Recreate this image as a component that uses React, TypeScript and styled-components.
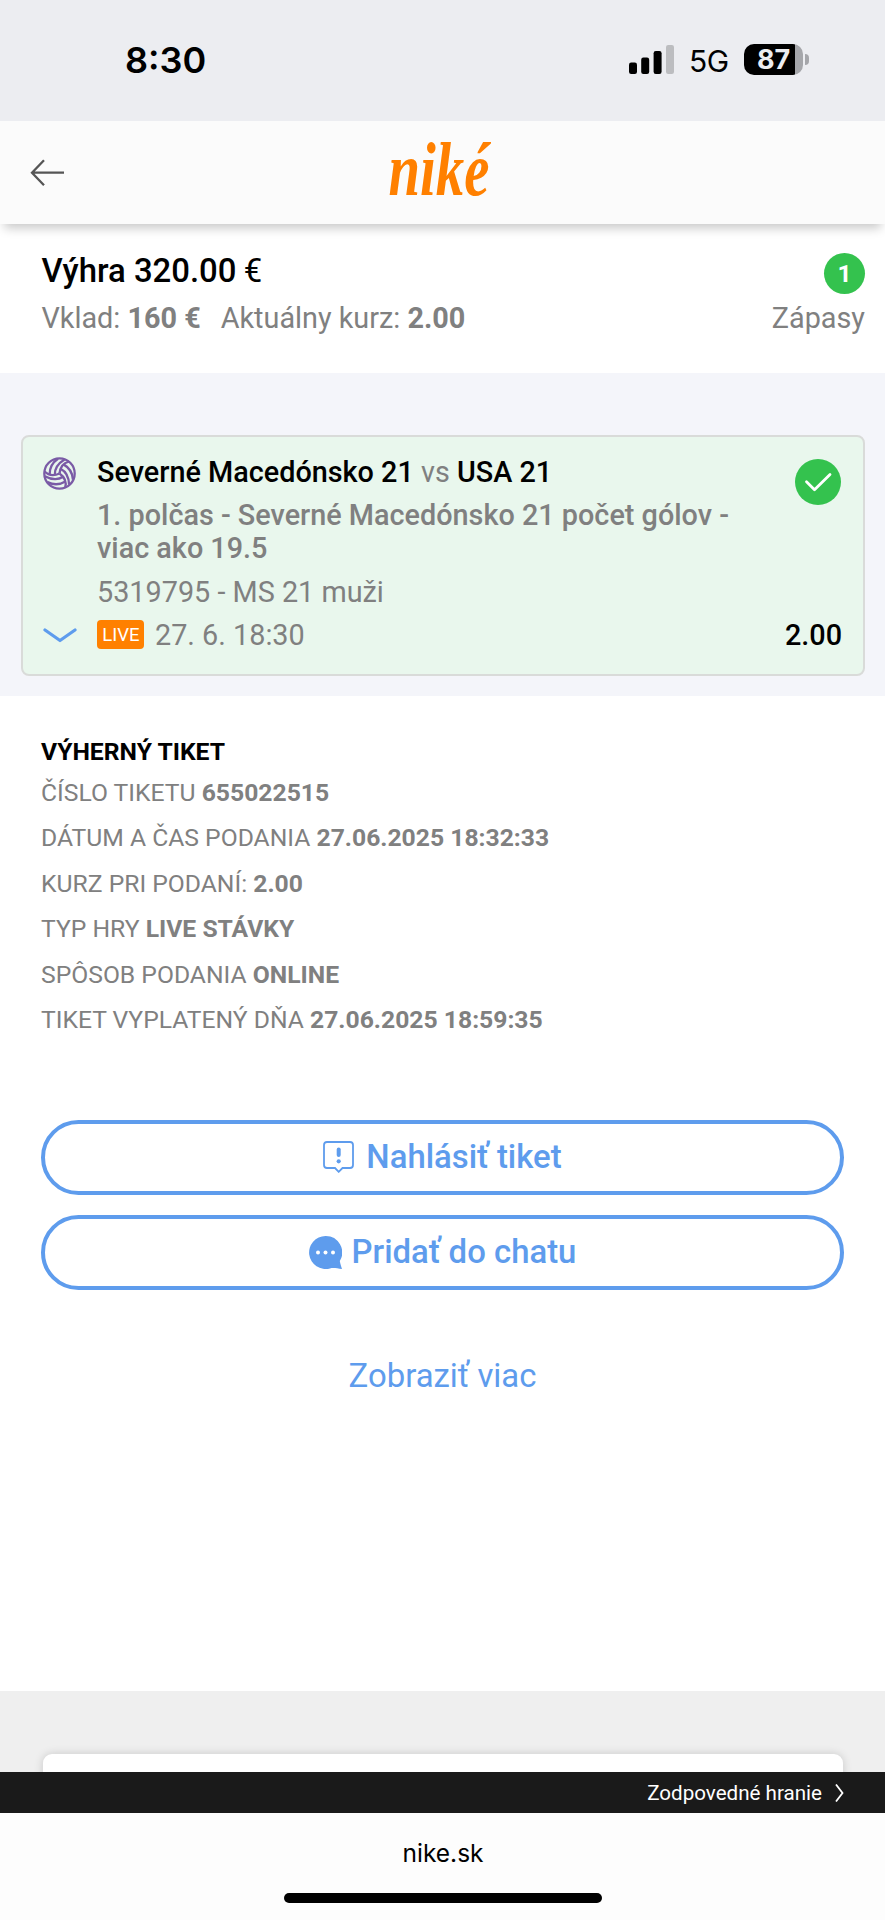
import React from "react";
import styled, { createGlobalStyle } from "styled-components";

const Global = createGlobalStyle`
  * { box-sizing: border-box; }
  body { margin: 0; background: #fff; font-family: Roboto, "Liberation Sans", sans-serif; color: #000; }
`;

const Screen = styled.div`
  width: 885px;
  height: 1920px;
  display: flex;
  flex-direction: column;
  overflow: hidden;
  background: #fff;
`;

const StatusBar = styled.div`
  height: 121px;
  flex: none;
  display: flex;
  align-items: flex-start;
  justify-content: space-between;
  padding: 44px 76px 0 125px;
  background: #ecedf1;
  font-family: Inter, "Liberation Sans", sans-serif;
`;

const Clock = styled.div`
  font-size: 36px;
  font-weight: 600;
  line-height: 32px;
`;

const StatusIcons = styled.div`
  display: flex;
  align-items: flex-start;
`;

const Network = styled.div`
  margin: 0 14px 0 15px;
  width: 41px;
  font-size: 30px;
  line-height: 35px;
  letter-spacing: -0.5px;
`;

const Battery = styled.div`
  width: 59px;
  height: 31px;
  border-radius: 10px;
  background: linear-gradient(to right, #000 51px, #a5a6aa 51px);
  color: #ecedf1;
  font-size: 27px;
  font-weight: 700;
  line-height: 32px;
  padding-left: 13px;
`;

const BatteryTip = styled.div`
  width: 4px;
  height: 11px;
  margin: 10px 0 0 2px;
  border-radius: 0 5px 5px 0;
  background: #a5a6aa;
`;

const Header = styled.header`
  height: 103px;
  flex: none;
  display: grid;
  grid-template-columns: 1fr auto 1fr;
  padding: 0 30px;
  background: #fbfbfb;
  box-shadow: 0 8px 10px -4px rgba(0, 0, 0, 0.22);
  z-index: 1;
`;

const BackButton = styled.button`
  display: flex;
  align-items: flex-start;
  border: 0;
  padding: 38px 0 0;
  background: none;
`;

const Summary = styled.section`
  height: 149px;
  flex: none;
  display: flex;
  justify-content: space-between;
  padding: 26px 20px 0 41.5px;
`;

const SummaryTitle = styled.h1`
  margin: 0;
  font-size: 32.9px;
  font-weight: 500;
  line-height: 41px;
`;

const Currency = styled.span`
  margin-left: -1px;
  font-weight: 400;
`;

const SummaryText = styled.div`
  margin-top: 6px;
  font-size: 28.8px;
  line-height: 43px;
  color: #808080;
  b { font-weight: 700; }
`;

const StakePart = styled.span`
  margin-right: 20px;
`;

const SummaryCount = styled.div`
  display: flex;
  flex-direction: column;
  align-items: flex-end;
`;

const CountBadge = styled.div`
  width: 41px;
  height: 41px;
  margin-top: 3px;
  border-radius: 50%;
  background: #34c24e;
  color: #fff;
  font-size: 24.7px;
  font-weight: 700;
  line-height: 41px;
  text-align: center;
`;

const CountLabel = styled.div`
  margin-top: 3px;
  font-size: 28.8px;
  line-height: 43px;
  color: #808080;
`;

const BetArea = styled.section`
  height: 323px;
  flex: none;
  padding: 62px 20px 0 21px;
  background: #f4f5fa;
`;

const BetCard = styled.article`
  height: 241px;
  display: grid;
  grid-template-columns: 54px 1fr 60px;
  padding: 19px 22px 0 20px;
  border: 2px solid #d9dbd9;
  border-radius: 8px;
  background: #e9f7ed;
  font-size: 28.8px;
`;

const IconColumn = styled.div`
  display: flex;
  flex-direction: column;
  justify-content: space-between;
  padding: 1px 0 31px;
  svg { display: block; flex: none; }
`;

const BetInfo = styled.div`
  color: #808080;
  white-space: nowrap;
`;

const Teams = styled.div`
  line-height: 33px;
  b { font-weight: 500; color: #000; }
`;

const Market = styled.div`
  margin-top: 10px;
  font-weight: 500;
  line-height: 33px;
`;

const Event = styled.div`
  margin-top: 11px;
  line-height: 33px;
`;

const Schedule = styled.div`
  display: flex;
  gap: 11px;
  margin-top: 10px;
  line-height: 33px;
`;

const LiveTag = styled.span`
  width: 47px;
  height: 29px;
  margin-top: 1px;
  padding-left: 1px;
  border-radius: 4px;
  background: #ff8000;
  color: #fff;
  font-size: 18.5px;
  line-height: 30px;
  text-align: center;
`;

const ResultColumn = styled.div`
  display: flex;
  flex-direction: column;
  align-items: flex-end;
  justify-content: space-between;
  padding: 3px 0 22px;
`;

const Odds = styled.div`
  font-weight: 500;
  line-height: 33px;
  margin-right: -1px;
`;

const Details = styled.section`
  height: 995px;
  flex: none;
  padding: 37px 41px 0;
`;

const DetailsTitle = styled.h2`
  margin: 0 0 -1px;
  font-size: 24.7px;
  font-weight: 700;
  line-height: 38px;
`;

const DetailRow = styled.div`
  font-size: 24.7px;
  line-height: 45.4px;
  color: #808080;
  b { font-weight: 700; }
`;

const Actions = styled.div`
  display: flex;
  flex-direction: column;
  gap: 20px;
  margin-top: 78px;
`;

const ActionButton = styled.button<{ $gap: number }>`
  height: 75px;
  display: flex;
  align-items: center;
  justify-content: center;
  gap: ${(p) => p.$gap}px;
  padding: 0 0 1px;
  border: 4px solid #5e9ced;
  border-radius: 38px;
  background: #fff;
  color: #5e9ced;
  font: 500 32.9px/38px Roboto, sans-serif;
`;

const MoreLink = styled.a`
  display: block;
  margin-top: 67px;
  color: #5e9ced;
  font-size: 32.9px;
  line-height: 38px;
  text-align: center;
`;

const NextPanel = styled.section`
  height: 81px;
  flex: none;
  padding: 63px 42px 0 43px;
  overflow: hidden;
  background: #efefef;
`;

const NextCard = styled.div`
  height: 60px;
  border-radius: 9px;
  background: #fff;
  box-shadow: 0 0 10px rgba(0, 0, 0, 0.16);
`;

const ResponsibleBar = styled.div`
  height: 41px;
  flex: none;
  display: flex;
  align-items: center;
  justify-content: flex-end;
  gap: 13px;
  padding-right: 41px;
  background: #1a1a1a;
  color: #fff;
  font-size: 20.6px;
`;

const BrowserBar = styled.footer`
  height: 107px;
  flex: none;
  display: flex;
  flex-direction: column;
  align-items: center;
  padding: 24px 0 0 1px;
  background: #fdfdfd;
  font: 400 24.5px/32px Inter, sans-serif;
`;

const HomeIndicator = styled.div`
  width: 318px;
  height: 10px;
  margin-top: 24px;
  border-radius: 5px;
  background: #000;
`;

const Signal = () => (
  <svg width="46" height="31" viewBox="0 0 46 31">
    <rect x="1" y="18.5" width="8" height="11.5" rx="2.2" />
    <rect x="13.2" y="13.5" width="8" height="16.5" rx="2.2" />
    <rect x="25.6" y="7" width="8" height="23" rx="2.2" />
    <rect x="38" y="1" width="8" height="29" rx="2.2" fill="#bcbdc0" />
  </svg>
);

const BackArrow = () => (
  <svg width="35" height="27" viewBox="0 0 35 27" fill="none" stroke="#555" strokeWidth="2.3">
    <path d="M34 13.7H2M14 1.2L2 13.7L14 26.2" />
  </svg>
);

const Logo = () => (
  <svg width="125" height="103" viewBox="0 0 125 103" overflow="visible">
    <text
      x="8.500"
      y="73.500"
      fontFamily="'Liberation Serif', serif"
      fontSize="77"
      fontWeight="700"
      fontStyle="italic"
      fill="#ff8000"
      textLength="101"
      lengthAdjust="spacingAndGlyphs"
    >
      niké
    </text>
  </svg>
);

const Ball = () => (
  <svg width="33" height="33" viewBox="0 0 33 33" fill="none" stroke="#7a5ba6" strokeWidth="2.3">
    <circle cx="16.5" cy="16.5" r="15.2" />
    {[0, 120, 240].map((a) => (
      <g key={a} transform={`rotate(${a} 16.5 16.5)`}>
        <path d="M16.5 16.5C17 11 20 6 26 4.5" />
        <path d="M11.8 18C11.5 12 15 6.5 21.5 2.5" />
        <path d="M6.6 17.6C6.5 11 9.5 5.5 15 1.8" />
      </g>
    ))}
  </svg>
);

const ChevronDown = () => (
  <svg width="34" height="15" viewBox="0 0 34 15" fill="none" stroke="#5e9ced" strokeWidth="3.2" strokeLinecap="round" strokeLinejoin="round">
    <path d="M2 2L17 12.5L32 2" />
  </svg>
);

const Check = () => (
  <svg width="46" height="46" viewBox="0 0 46 46" fill="none">
    <circle cx="23" cy="23" r="23" fill="#34c24e" />
    <path d="M11.5 22.8L19.5 30.8L35 15.5" stroke="#fff" strokeWidth="2.8" strokeLinecap="round" strokeLinejoin="round" />
  </svg>
);

const ReportIcon = () => (
  <svg width="31" height="32" viewBox="0 0 31 32" fill="none" stroke="#5e9ced" strokeWidth="1.8">
    <path d="M4 1H27Q30 1 30 4V24Q30 27 27 27H19.5L15.7 30.8L12 27H4Q1 27 1 24V4Q1 1 4 1Z" />
    <path d="M15.7 8.5V14" strokeWidth="4" strokeLinecap="round" />
    <circle cx="15.7" cy="20.3" r="2.1" fill="#5e9ced" stroke="none" />
  </svg>
);

const ChatIcon = () => (
  <svg width="33" height="33" viewBox="0 0 33 33" fill="#5e9ced">
    <path d="M16.5 0A16.5 16.5 0 1 0 21 32.4C24 31.3 28 32.3 33 33C32.3 30.5 31.5 28.5 30.8 25A16.5 16.5 0 0 0 16.5 0Z" />
    <g fill="#fff">
      <circle cx="9" cy="16.5" r="2" />
      <circle cx="16.5" cy="16.5" r="2" />
      <circle cx="24" cy="16.5" r="2" />
    </g>
  </svg>
);

const ChevronRight = () => (
  <svg width="9" height="18" viewBox="0 0 9 18" fill="none" stroke="#fff" strokeWidth="1.8">
    <path d="M1 0.5L7.5 9L1 17.5" />
  </svg>
);

const details = [
  ["ČÍSLO TIKETU", "655022515"],
  ["DÁTUM A ČAS PODANIA", "27.06.2025 18:32:33"],
  ["KURZ PRI PODANÍ:", "2.00"],
  ["TYP HRY", "LIVE STÁVKY"],
  ["SPÔSOB PODANIA", "ONLINE"],
  ["TIKET VYPLATENÝ DŇA", "27.06.2025 18:59:35"],
];

export default function App() {
  return (
    <Screen>
      <Global />
      <StatusBar>
        <Clock>8:30</Clock>
        <StatusIcons>
          <Signal />
          <Network>5G</Network>
          <Battery>87</Battery>
          <BatteryTip />
        </StatusIcons>
      </StatusBar>
      <Header>
        <BackButton aria-label="Späť"><BackArrow /></BackButton>
        <Logo />
      </Header>
      <Summary>
        <div>
          <SummaryTitle>Výhra 320.00 <Currency>€</Currency></SummaryTitle>
          <SummaryText>
            <StakePart>Vklad: <b>160 €</b></StakePart>
            Aktuálny kurz: <b>2.00</b>
          </SummaryText>
        </div>
        <SummaryCount>
          <CountBadge>1</CountBadge>
          <CountLabel>Zápasy</CountLabel>
        </SummaryCount>
      </Summary>
      <BetArea>
        <BetCard>
          <IconColumn>
            <Ball />
            <ChevronDown />
          </IconColumn>
          <BetInfo>
            <Teams><b>Severné Macedónsko 21</b> vs <b>USA 21</b></Teams>
            <Market>1. polčas - Severné Macedónsko 21 počet gólov -<br />viac ako 19.5</Market>
            <Event>5319795 - MS 21 muži</Event>
            <Schedule><LiveTag>LIVE</LiveTag>27. 6. 18:30</Schedule>
          </BetInfo>
          <ResultColumn>
            <Check />
            <Odds>2.00</Odds>
          </ResultColumn>
        </BetCard>
      </BetArea>
      <Details>
        <DetailsTitle>VÝHERNÝ TIKET</DetailsTitle>
        {details.map(([label, value]) => (
          <DetailRow key={label}>{label} <b>{value}</b></DetailRow>
        ))}
        <Actions>
          <ActionButton $gap={12}><ReportIcon />Nahlásiť tiket</ActionButton>
          <ActionButton $gap={10}><ChatIcon />Pridať do chatu</ActionButton>
        </Actions>
        <MoreLink>Zobraziť viac</MoreLink>
      </Details>
      <NextPanel><NextCard /></NextPanel>
      <ResponsibleBar>Zodpovedné hranie<ChevronRight /></ResponsibleBar>
      <BrowserBar>
        nike.sk
        <HomeIndicator />
      </BrowserBar>
    </Screen>
  );
}
